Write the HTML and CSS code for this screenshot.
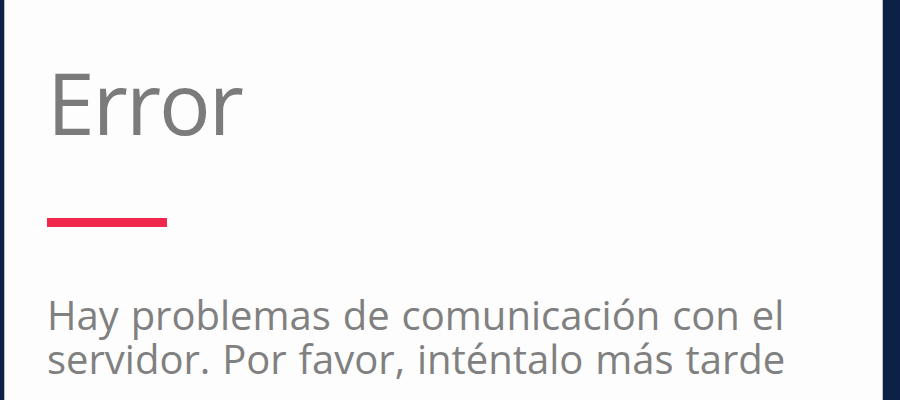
FILE: index.html
```html
<!DOCTYPE html>
<html lang="es">
<head>
<meta charset="utf-8">
<title>Error</title>
<link rel="stylesheet" href="styles.css">
</head>
<body>
<div class="panel">
  <h1 class="title">Error</h1>
  <div class="rule"></div>
  <p class="message">Hay problemas de comunicación con el servidor. Por favor, inténtalo más tarde</p>
</div>
</body>
</html>
```
FILE: styles.css
```css
html, body {
  margin: 0;
  padding: 0;
  height: 100%;
}
body {
  background: #0b2146;
  font-family: "Open Sans", "DejaVu Sans", sans-serif;
  overflow: hidden;
}
.panel {
  margin-left: 4px;
  width: 879px;
  height: 400px;
  background: #fdfdfd;
  border-left: 1px solid #b9c0cc;
  border-right: 1px solid #b9c0cc;
  box-sizing: border-box;
  padding: 52px 0 0 42px;
}
.title {
  margin: 0;
  font-size: 86px;
  font-weight: 400;
  line-height: 100px;
  color: #7b7b7b;
  letter-spacing: -2px;
}
.rule {
  width: 120px;
  height: 9px;
  background: #f0284e;
  margin-top: 66px;
}
.message {
  margin: 66px 0 0 0;
  font-size: 40px;
  line-height: 44px;
  color: #808080;
  word-spacing: 1.5px;
  width: 810px;
}
```
